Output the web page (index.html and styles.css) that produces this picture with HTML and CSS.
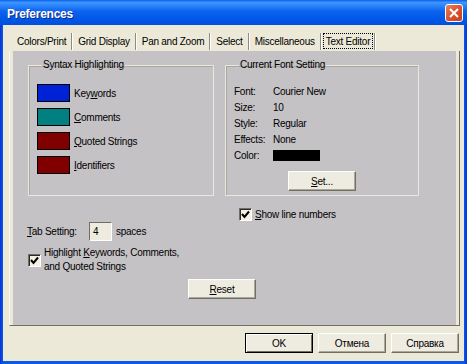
FILE: index.html
```html
<!DOCTYPE html>
<html lang="en">
<head>
<meta charset="UTF-8">
<title>Preferences</title>
<link rel="stylesheet" href="styles.css">
</head>
<body>

<div class="window">
    <div class="titlebar">
        <span class="title">Preferences</span>
        <span class="close">
            <svg width="10" height="10" viewBox="0 0 10 10"><path d="M1 1 L9 9 M9 1 L1 9" stroke="#fff" stroke-width="2" fill="none"/></svg>
        </span>
    </div>

    <div class="client">
        <div class="tabs">
            <span class="tab">Colors/Print</span>
            <span class="tab">Grid Display</span>
            <span class="tab">Pan and Zoom</span>
            <span class="tab">Select</span>
            <span class="tab">Miscellaneous</span>
            <span class="tab active"><span class="focus">Text Editor</span></span>
        </div>

        <div class="page">
            <div class="canvas">
                <div class="groups">
                    <fieldset class="group syntax">
                        <legend>Syntax Highlighting</legend>
                        <div class="swatchRow"><span class="swatch keywords"></span><span>Key<u>w</u>ords</span></div>
                        <div class="swatchRow"><span class="swatch comments"></span><span><u>C</u>omments</span></div>
                        <div class="swatchRow"><span class="swatch strings"></span><span><u>Q</u>uoted Strings</span></div>
                        <div class="swatchRow"><span class="swatch idents"></span><span><u>I</u>dentifiers</span></div>
                    </fieldset>

                    <fieldset class="group fontSetting">
                        <legend>Current Font Setting</legend>
                        <div class="prop"><span class="propName">Font:</span><span>Courier New</span></div>
                        <div class="prop"><span class="propName">Size:</span><span>10</span></div>
                        <div class="prop"><span class="propName">Style:</span><span>Regular</span></div>
                        <div class="prop"><span class="propName">Effects:</span><span>None</span></div>
                        <div class="prop"><span class="propName">Color:</span><span class="fontColor"></span></div>
                        <div class="setRow"><span class="btn setButton"><u>S</u>et...</span></div>
                    </fieldset>
                </div>

                <div class="check showLines">
                    <span class="box"><svg width="9" height="9" viewBox="0 0 9 9"><path d="M1 4 L3.5 7 L8 1.5" stroke="#000" stroke-width="2" fill="none"/></svg></span>
                    <span><u>S</u>how line numbers</span>
                </div>

                <div class="tabSetting">
                    <span class="tabLabel"><u>T</u>ab Setting:</span>
                    <span class="field">4</span>
                    <span class="unit">spaces</span>
                </div>

                <div class="check highlight">
                    <span class="box"><svg width="9" height="9" viewBox="0 0 9 9"><path d="M1 4 L3.5 7 L8 1.5" stroke="#000" stroke-width="2" fill="none"/></svg></span>
                    <span>Highlight <u>K</u>eywords, Comments,<br>and Quoted Strings</span>
                </div>

                <span class="btn resetButton"><u>R</u>eset</span>
            </div>
        </div>

        <div class="actions">
            <span class="btn default">OK</span>
            <span class="btn">Отмена</span>
            <span class="btn">Справка</span>
        </div>
    </div>
</div>

</body>
</html>
```

FILE: styles.css
```css
body {
    margin: 0;
    font-family: "Liberation Sans", Arial, sans-serif;
    font-size: 10px;
    letter-spacing: -0.25px;
    color: #000;
}

.window {
    width: 467px;
    height: 364px;
    display: flex;
    flex-direction: column;
    background: linear-gradient(to right, #0831d9, #0a5ae8 3px, #0a5ae8 464px, #0831d9);
}

/* title bar */
.titlebar {
    height: 25px;
    flex: none;
    display: flex;
    align-items: center;
    justify-content: space-between;
    padding: 0 4px 0 7px;
    background: linear-gradient(to bottom, #0a5ee8 0%, #3d95ff 10%, #2b86fb 22%, #0d63ee 45%, #0058e8 75%, #0050dc 100%);
}

.title {
    color: #fff;
    font-size: 12px;
    font-weight: bold;
    letter-spacing: -0.25px;
    margin-top: 2px;
    text-shadow: 1px 1px 0 #0a2a8a;
}

.close {
    width: 18px;
    height: 18px;
    box-sizing: border-box;
    border: 1px solid #fff;
    border-radius: 3px;
    background: linear-gradient(135deg, #e8825e, #d9532f 50%, #c2401f);
    display: flex;
    align-items: center;
    justify-content: center;
}

/* dialog client area */
.client {
    flex: 1;
    margin: 0 3px 3px;
    background-color: #ece9d8;
    display: flex;
    flex-direction: column;
}

.tabs {
    display: flex;
    height: 18px;
    margin-top: 8px;
    padding-left: 9px;
}

.tab {
    padding: 0 5px;
    line-height: 17px;
    height: 17px;
    border-right: 1px solid #8e8b80;
    box-shadow: 1px 0 0 #fff;
    margin-right: 1px;
    white-space: nowrap;
}

.tab.active {
    padding: 0 1px;
}

.focus {
    display: block;
    height: 16px;
    line-height: 15px;
    padding: 0 2px;
    box-sizing: border-box;
    border: 1px dotted #000;
}

.page {
    width: 451px;
    margin-left: 6px;
    box-sizing: border-box;
    padding: 0 3px;
    border-left: 1px solid #f8f7f1;
    border-right: 1px solid #716f64;
    border-bottom: 1px solid #716f64;
    display: flex;
}

.canvas {
    flex: 1;
    height: 274px;
    background-color: #c4c2c5;
    padding: 8px 0 0 15px;
    box-sizing: border-box;
    display: flex;
    flex-direction: column;
    align-items: flex-start;
}

/* group boxes */
.groups {
    display: flex;
    gap: 11px;
}

.group {
    margin: 0;
    height: 137px;
    box-sizing: border-box;
    border: 1px solid #eae8de;
    box-shadow: inset 1px 1px 0 #a9a79e;
    padding: 13px 8px 4px;
}

.group legend {
    padding: 0 1px;
    margin-left: 5px;
    line-height: 12px;
}

.syntax {
    width: 186px;
}

.fontSetting {
    width: 194px;
    padding-top: 12px;
}

.swatchRow {
    display: flex;
    align-items: center;
    gap: 4px;
    height: 18px;
    margin-bottom: 6px;
}

.swatch {
    width: 33px;
    height: 18px;
    box-sizing: border-box;
    border: 1px solid #000;
}

.keywords { background-color: #0022d6; }
.comments { background-color: #008080; }
.strings { background-color: #800000; }
.idents { background-color: #800000; }

.prop {
    display: flex;
    align-items: center;
    height: 16px;
}

.propName {
    width: 39px;
}

.fontColor {
    width: 47px;
    height: 11px;
    background-color: #000;
}

.setRow {
    display: flex;
    justify-content: center;
    margin-top: 8px;
}

/* buttons */
.btn {
    width: 68px;
    height: 20px;
    box-sizing: border-box;
    display: flex;
    align-items: center;
    justify-content: center;
    background-color: #eeebe0;
    border: 1px solid;
    border-color: #fff #716f64 #716f64 #fff;
    box-shadow: inset -1px -1px 0 #aca899;
}

.btn.default {
    border: 1px solid #000;
    box-shadow: inset 1px 1px 0 #fff, inset -1px -1px 0 #716f64;
}

/* check boxes */
.check {
    display: flex;
    align-items: center;
    gap: 3px;
}

.box {
    width: 13px;
    height: 13px;
    box-sizing: border-box;
    border: 1px solid;
    border-color: #716f64 #fff #fff #716f64;
    box-shadow: inset 1px 1px 0 #2b2a26;
    background-color: #f3f1e6;
    display: flex;
    align-items: center;
    justify-content: center;
}

.showLines {
    margin: 12px 0 0 211px;
    line-height: 13px;
}

.tabSetting {
    display: flex;
    align-items: center;
    margin: 1px 0 0 -1px;
}

.tabLabel {
    width: 62px;
}

.field {
    width: 23px;
    height: 19px;
    box-sizing: border-box;
    padding-left: 3px;
    line-height: 17px;
    background-color: #eeebe0;
    border: 1px solid;
    border-color: #716f64 #fff #fff #716f64;
}

.unit {
    margin-left: 4px;
}

.highlight {
    margin-top: 5px;
    line-height: 14px;
}

.resetButton {
    margin: 5px 0 0 160px;
}

/* bottom row */
.actions {
    display: flex;
    justify-content: flex-end;
    gap: 5px;
    margin-top: 7px;
    padding-right: 5px;
}
```
